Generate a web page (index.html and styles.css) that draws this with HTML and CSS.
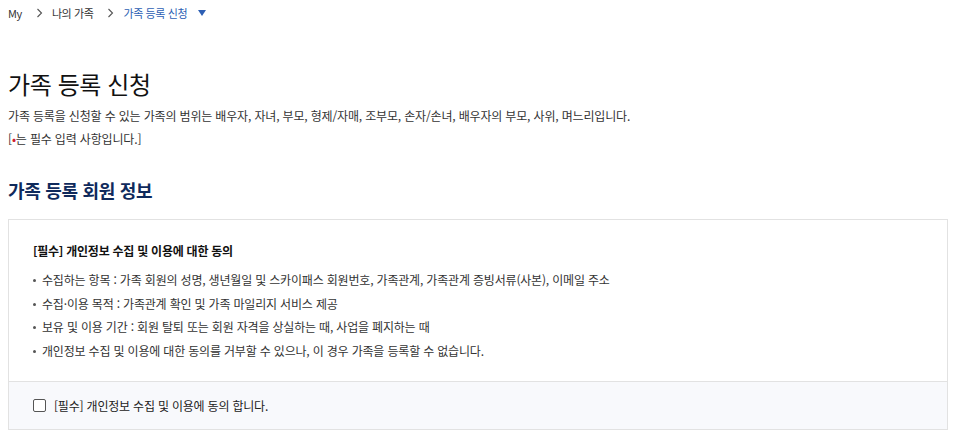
FILE: index.html
```html
<!DOCTYPE html>
<html lang="ko">
<head>
<meta charset="utf-8">
<link rel="stylesheet" href="styles.css">
</head>
<body>
<nav class="crumbs">
  <span class="crumb">My</span>
  <svg class="sep" width="7" height="10" viewBox="0 0 7 10"><path d="M1.5 1 L5.5 5 L1.5 9" fill="none" stroke="#555" stroke-width="1.1"/></svg>
  <span class="crumb">나의 가족</span>
  <svg class="sep" width="7" height="10" viewBox="0 0 7 10"><path d="M1.5 1 L5.5 5 L1.5 9" fill="none" stroke="#555" stroke-width="1.1"/></svg>
  <span class="crumb current">가족 등록 신청</span>
  <span class="caret"></span>
</nav>
<h1 class="title">가족 등록 신청</h1>
<p class="desc">가족 등록을 신청할 수 있는 가족의 범위는 배우자, 자녀, 부모, 형제/자매, 조부모, 손자/손녀, 배우자의 부모, 사위, 며느리입니다.</p>
<p class="note">[<span class="dot">•</span>는 필수 입력 사항입니다.]</p>
<h2 class="section">가족 등록 회원 정보</h2>
<div class="box">
  <div class="box-body">
    <h3 class="box-title">[필수] 개인정보 수집 및 이용에 대한 동의</h3>
    <ul class="list">
      <li>수집하는 항목 : 가족 회원의 성명, 생년월일 및 스카이패스 회원번호, 가족관계, 가족관계 증빙서류(사본), 이메일 주소</li>
      <li>수집·이용 목적 : 가족관계 확인 및 가족 마일리지 서비스 제공</li>
      <li>보유 및 이용 기간 : 회원 탈퇴 또는 회원 자격을 상실하는 때, 사업을 폐지하는 때</li>
      <li>개인정보 수집 및 이용에 대한 동의를 거부할 수 있으나, 이 경우 가족을 등록할 수 없습니다.</li>
    </ul>
  </div>
  <label class="agree">
    <span class="check"></span>
    <span>[필수] 개인정보 수집 및 이용에 동의 합니다.</span>
  </label>
</div>
</body>
</html>
```
FILE: styles.css
```css
* { box-sizing: border-box; }
body {
  margin: 0;
  padding: 0 18px 0 8px;
  font-family: "Noto Sans CJK KR", "Noto Sans", sans-serif;
  color: #222;
  background: #fff;
}
.crumbs {
  display: flex;
  align-items: center;
  height: 28px;
  font-size: 11px;
  color: #333;
  padding-bottom: 2px;
  letter-spacing: -0.4px;
}
.sep {
  margin: 0 9px 0 14px;
}
.current { color: #2d5fb4; }
.caret {
  margin-left: 11px;
  width: 0; height: 0;
  border-left: 4px solid transparent;
  border-right: 4px solid transparent;
  border-top: 6px solid #2d5fb4;
}
.title {
  margin: 38px 0 0;
  font-size: 24px;
  font-weight: 400;
  line-height: 36px;
  color: #111;
  letter-spacing: -0.4px;
}
.desc {
  margin: 5px 0 0;
  font-size: 12px;
  line-height: 18px;
  color: #333;
  letter-spacing: -0.16px;
}
.note {
  margin: 5px 0 0;
  font-size: 12px;
  line-height: 18px;
  color: #333;
  letter-spacing: -0.16px;
}
.dot { color: #d02030; }
.section {
  margin: 29px 0 0;
  font-size: 18px;
  font-weight: 700;
  line-height: 26px;
  color: #0f2a5c;
  letter-spacing: -0.3px;
}
.box {
  margin-top: 16px;
  border: 1px solid #e2e2e2;
}
.box-body {
  padding: 22px 24px 16px;
}
.box-title {
  margin: 0 0 11px;
  font-size: 12px;
  font-weight: 700;
  line-height: 18px;
  color: #111;
  letter-spacing: -0.25px;
}
.list {
  margin: 0;
  padding: 0;
  list-style: none;
}
.list li {
  position: relative;
  padding-left: 9px;
  font-size: 12px;
  line-height: 18px;
  margin-bottom: 5.5px;
  color: #333;
  letter-spacing: -0.18px;
}
.list li::before {
  content: "";
  position: absolute;
  left: 0;
  top: 8px;
  width: 3px;
  height: 3px;
  border-radius: 50%;
  background: #555;
}
.agree {
  display: flex;
  align-items: center;
  gap: 8px;
  height: 48px;
  padding: 0 24px;
  background: #f8f9fc;
  border-top: 1px solid #e2e2e2;
  font-size: 12px;
  color: #222;
  letter-spacing: -0.2px;
}
.check {
  width: 13px;
  height: 13px;
  border: 1px solid #555;
  border-radius: 2px;
  background: #fff;
}
```
